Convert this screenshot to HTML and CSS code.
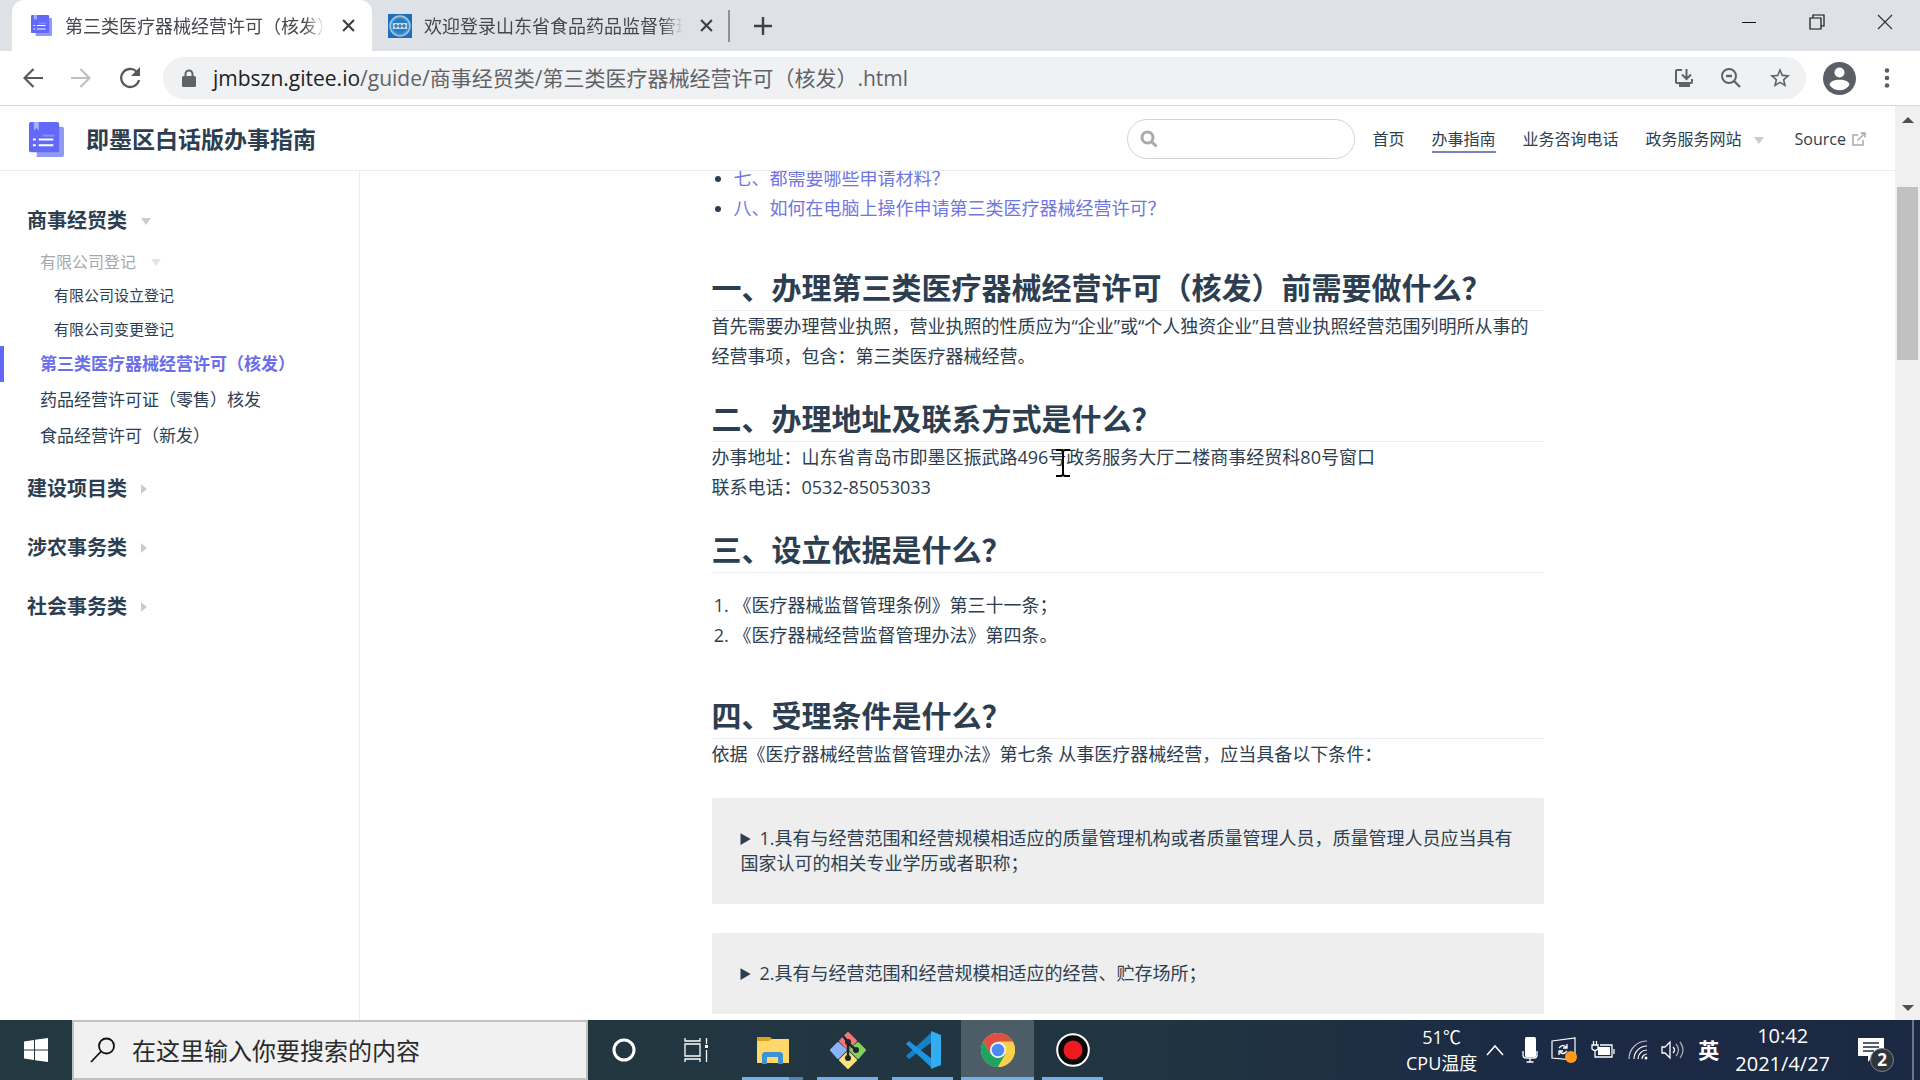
FILE: index.html
```html
<!DOCTYPE html>
<html lang="zh-CN">
<head>
<meta charset="utf-8">
<title>第三类医疗器械经营许可（核发）</title>
<link rel="stylesheet" href="styles.css">
</head>
<body>
<svg class="defs" width="0" height="0" aria-hidden="true">
  <symbol id="book" viewBox="0 0 36 36">
    <path fill="#8e9bf0" d="M8 5h26a2 2 0 0 1 2 2v27a2 2 0 0 1-2 2H8z"/>
    <path fill="#6269f8" d="M2 0h27a2 2 0 0 1 2 2v27a2 2 0 0 1-2 2H2a2 2 0 0 1-2-2V2a2 2 0 0 1 2-2z"/>
    <path fill="#a9b1fb" d="M5 0h5v9l-2.500-3L5 9z"/>
    <path fill="none" stroke="#8990fa" stroke-width="2" d="M14 14h12"/>
    <path fill="none" stroke="#fff" stroke-width="2" d="M4 18h3M4 24h3M10 18h15M10 24h15"/>
  </symbol>
  <symbol id="cross" viewBox="0 0 12 12"><path fill="none" stroke="#3c4043" stroke-width="2" d="M1 1l10 10M11 1L1 11"/></symbol>
</svg>

<header class="tabs">
  <div class="tab tab-active">
    <svg class="tab-icon" width="21" height="21"><use href="#book"/></svg>
    <span class="tab-title">第三类医疗器械经营许可（核发）</span>
    <button class="tab-close" aria-label="关闭标签页"><svg width="13" height="13"><use href="#cross"/></svg></button>
  </div>
  <div class="tab">
    <svg class="tab-icon tab-emblem" width="24" height="24" viewBox="0 0 24 24"><rect width="24" height="24" fill="#1c6fb8"/><circle cx="12" cy="12" r="10" fill="#4a94cf" stroke="#a3c8e6" stroke-width="1.500"/><circle cx="12" cy="12" r="7.500" fill="#2c7cc0"/><path fill="#bcd9ef" d="M5 9h14v6H5z"/><path stroke="#2467a6" stroke-width="1.200" d="M8 10v4M12 10v4M16 10v4M6 12h12"/></svg>
    <span class="tab-title">欢迎登录山东省食品药品监督管理局</span>
    <button class="tab-close" aria-label="关闭标签页"><svg width="13" height="13"><use href="#cross"/></svg></button>
  </div>
  <button class="new-tab" aria-label="新标签页"><svg width="18" height="18" viewBox="0 0 18 18"><path stroke="#3c4043" stroke-width="2.400" d="M9 0v18M0 9h18"/></svg></button>
  <div class="win-controls">
    <button aria-label="最小化"><svg width="16" height="16" viewBox="0 0 16 16"><path stroke="#111" d="M1 8.500h14"/></svg></button>
    <button aria-label="还原"><svg width="16" height="16" viewBox="0 0 16 16"><path fill="none" stroke="#111" stroke-width="1.200" d="M1 4h11v11H1zM4 4V1h11v11h-3"/></svg></button>
    <button aria-label="关闭"><svg width="16" height="16" viewBox="0 0 16 16"><path stroke="#333" stroke-width="1.200" d="M1 1l14 14M15 1L1 15"/></svg></button>
  </div>
</header>

<div class="toolbar">
  <button aria-label="后退"><svg width="20" height="20" viewBox="0 0 20 20"><path fill="none" stroke="#55595d" stroke-width="2.200" d="M20 10H2M10.500 1L1.500 10l9 9"/></svg></button>
  <button aria-label="前进"><svg width="20" height="20" viewBox="0 0 20 20"><path fill="none" stroke="#bdc1c5" stroke-width="2.200" d="M0 10h18M9.500 1l9 9-9 9"/></svg></button>
  <button aria-label="重新加载"><svg width="22" height="22" viewBox="0 0 22 22"><path fill="none" stroke="#55595d" stroke-width="2.300" d="M17.500 4.500A9 9 0 1 0 20 13"/><path fill="#55595d" d="M21 0v9h-9z"/></svg></button>
  <div class="omnibox">
    <svg width="14" height="18" viewBox="0 0 14 18"><path fill="none" stroke="#5f6368" stroke-width="2" d="M3.500 8V5a3.500 3.500 0 0 1 7 0v3"/><rect y="7" width="14" height="11" rx="1.500" fill="#5f6368"/></svg>
    <p class="url"><span class="url-host">jmbszn.gitee.io</span>/guide/商事经贸类/第三类医疗器械经营许可（核发）.html</p>
    <button aria-label="安装"><svg width="20" height="20" viewBox="0 0 20 20"><path fill="none" stroke="#5f6368" stroke-width="2" d="M8 2H3a1 1 0 0 0-1 1v11a1 1 0 0 0 1 1h14a1 1 0 0 0 1-1v-3M12.500 1v9M8 6.500l4.500 4.500L17 6.500"/><path fill="#5f6368" d="M5 15h11v4H5z"/></svg></button>
    <button aria-label="缩放"><svg width="20" height="20" viewBox="0 0 20 20"><g fill="none" stroke="#5f6368" stroke-width="2"><circle cx="8" cy="8" r="7"/><path d="M13 13l6 6M5 8h6" stroke-width="2.300"/></g></svg></button>
    <button aria-label="收藏"><svg width="24" height="24" viewBox="0 0 24 24"><path fill="#5f6368" d="M22 9.240l-7.190-.620L12 2 9.190 8.630 2 9.240l5.460 4.730L5.820 21 12 17.270 18.180 21l-1.630-7.030L22 9.240zM12 15.400l-3.760 2.270 1-4.280-3.320-2.880 4.380-.380L12 6.100l1.710 4.040 4.380.380-3.320 2.880 1 4.280L12 15.400z"/></svg></button>
  </div>
  <button aria-label="账号"><svg width="33" height="33" viewBox="0 0 33 33"><circle cx="16.500" cy="16.500" r="16.500" fill="#5a5e66"/><circle cx="16.500" cy="10.500" r="5" fill="#fff"/><path fill="#fff" d="M6.500 23c0-7 20-7 20 0-4.500 7-15.500 7-20 0z"/></svg></button>
  <button class="menu" aria-label="菜单"><svg width="6" height="20" viewBox="0 0 6 20"><g fill="#5a5e63"><circle cx="3" cy="2.500" r="2.300"/><circle cx="3" cy="10" r="2.300"/><circle cx="3" cy="17.500" r="2.300"/></g></svg></button>
</div>

<div class="viewport">
  <div class="site">
    <header class="navbar">
      <svg width="35" height="35"><use href="#book"/></svg>
      <a class="site-name" href="#">即墨区白话版办事指南</a>
      <label class="search">
        <svg width="18" height="18" viewBox="0 0 18 18"><g fill="none" stroke="#aaa" stroke-width="3"><circle cx="7.500" cy="7.500" r="5.500"/><path d="M11.500 11.500l5 5"/></g></svg>
        <input type="text" aria-label="搜索">
      </label>
      <nav class="links">
        <a href="#">首页</a>
        <a href="#" class="current">办事指南</a>
        <a href="#">业务咨询电话</a>
        <a href="#" class="dropdown">政务服务网站<i class="arrow down"></i></a>
        <a href="#" class="source">Source<svg width="14" height="14" viewBox="0 0 14 14"><path fill="none" stroke="#aaa" stroke-width="1.500" d="M6 3H1v10h10V8M5.500 8.500L13 1M8.500 1H13v4.500"/></svg></a>
      </nav>
    </header>
    <div class="body">
      <aside class="sidebar">
        <section>
          <h3>商事经贸类<i class="arrow down"></i></h3>
          <p class="subgroup">有限公司登记<i class="arrow down"></i></p>
          <a class="sub" href="#">有限公司设立登记</a>
          <a class="sub" href="#">有限公司变更登记</a>
          <a class="item active" href="#">第三类医疗器械经营许可（核发）</a>
          <a class="item" href="#">药品经营许可证（零售）核发</a>
          <a class="item" href="#">食品经营许可（新发）</a>
        </section>
        <h3>建设项目类<i class="arrow right"></i></h3>
        <h3>涉农事务类<i class="arrow right"></i></h3>
        <h3>社会事务类<i class="arrow right"></i></h3>
      </aside>
      <main>
        <article>
          <ul class="toc">
            <li><a href="#">七、都需要哪些申请材料？</a></li>
            <li><a href="#">八、如何在电脑上操作申请第三类医疗器械经营许可？</a></li>
          </ul>
          <h2>一、办理第三类医疗器械经营许可（核发）前需要做什么？</h2>
          <p>首先需要办理营业执照，营业执照的性质应为“企业”或“个人独资企业”且营业执照经营范围列明所从事的经营事项，包含：第三类医疗器械经营。</p>
          <h2>二、办理地址及联系方式是什么？</h2>
          <p>办事地址：山东省青岛市即墨区振武路496号政务服务大厅二楼商事经贸科80号窗口<br>联系电话：0532-85053033</p>
          <h2>三、设立依据是什么？</h2>
          <ol>
            <li>《医疗器械监督管理条例》第三十一条；</li>
            <li>《医疗器械经营监督管理办法》第四条。</li>
          </ol>
          <h2>四、受理条件是什么？</h2>
          <p>依据《医疗器械经营监督管理办法》第七条 从事医疗器械经营，应当具备以下条件：</p>
          <details><summary>1.具有与经营范围和经营规模相适应的质量管理机构或者质量管理人员，质量管理人员应当具有国家认可的相关专业学历或者职称；</summary></details>
          <details><summary>2.具有与经营范围和经营规模相适应的经营、贮存场所；</summary></details>
        </article>
      </main>
    </div>
  </div>
  <div class="scrollbar"><i class="scroll-up"></i><div class="track"><div class="thumb"></div></div><i class="scroll-down"></i></div>
</div>

<footer class="taskbar">
  <button class="start" aria-label="开始"><svg width="24" height="24" viewBox="0 0 24 24"><path fill="#fff" d="M0 3.500L10 2v9.500H0zM11 1.800L24 0v11.500H11zM0 12.500h10V22L0 20.500zM11 12.500h13V24l-13-1.800z"/></svg></button>
  <label class="task-search">
    <svg width="26" height="26" viewBox="0 0 26 26"><g fill="none" stroke="#111" stroke-width="1.800"><circle cx="16.500" cy="9" r="7.500"/><path d="M11 14.500L1 25"/></g></svg>
    <input type="text" placeholder="在这里输入你要搜索的内容" aria-label="搜索">
  </label>
  <div class="apps">
    <button aria-label="Cortana"><svg width="24" height="24" viewBox="0 0 24 24"><circle cx="12" cy="12" r="10" fill="none" stroke="#fff" stroke-width="3"/></svg></button>
    <button aria-label="任务视图"><svg width="25" height="24" viewBox="0 0 25 24"><path fill="none" stroke="#fff" stroke-width="1.300" d="M1 0v3h15V0M1 6h15v12H1zM1 24v-3h15v3M22.500 0v6M22.500 12v12"/><path fill="#fff" d="M21 7h3v3h-3z"/></svg></button>
    <button class="open stacked" aria-label="文件资源管理器"><svg width="32" height="28" viewBox="0 0 32 28"><path fill="#dca320" d="M0 1h13l3 3v4H0z"/><path fill="#ffd869" d="M0 5h12l3-2h17v24H0z"/><path fill="#3b92d4" d="M5 28V18l2-2h17l2 2v10h-5v-7H10v7z"/></svg></button>
    <button class="open" aria-label="Git"><svg width="36" height="38" viewBox="0 0 36 38"><g stroke-linejoin="round" stroke-width="2"><path fill="#f17878" stroke="#f17878" d="M18 2l8 8-8 8-8-8z"/><path fill="#8ab4fa" stroke="#8ab4fa" d="M8 12l8 7-8 8-7-8z"/><path fill="#83cf5e" stroke="#83cf5e" d="M28 12l7 7-7 8-8-8z"/><path fill="#fbe27d" stroke="#fbe27d" d="M18 21l8 8-8 8-8-8z"/></g><path fill="none" stroke="#202529" stroke-width="2.500" d="M13 5l5 6v16M18 12l8 7"/><g fill="#202529"><circle cx="18" cy="11" r="3"/><circle cx="26" cy="19" r="3"/><circle cx="18" cy="27" r="3"/></g></svg></button>
    <button class="open" aria-label="Visual Studio Code"><svg width="36" height="38" viewBox="0 0 36 38"><path fill="#1481c9" d="M1 25l3 3 23-17V1z"/><path fill="#1b95e0" d="M1 13l3-3 23 18v9z"/><path fill="#33adf2" d="M26 0l10 4v30l-10 4z"/></svg></button>
    <button class="open focused" aria-label="Chrome"><svg width="34" height="34" viewBox="0 0 34 34"><circle cx="17" cy="17" r="17" fill="#fbd049"/><path fill="#de5044" d="M2.300 8.500A17 17 0 0 1 31.700 8.500H17L9.600 21z"/><path fill="#1da462" d="M2.300 8.500A17 17 0 0 0 17 34l7.400-12.800H9.600z"/><path fill="#fbd049" d="M17 9h15a17 17 0 0 1-15 25l7.400-12.800z"/><circle cx="17" cy="17" r="8" fill="#f4f7fa"/><circle cx="17" cy="17" r="6.300" fill="#4c8bf5"/></svg></button>
    <button class="open" aria-label="录屏"><svg width="34" height="34" viewBox="0 0 34 34"><circle cx="17" cy="17" r="15.800" fill="#080808" stroke="#fff" stroke-width="2"/><circle cx="17" cy="17" r="9.500" fill="#ee1c20"/></svg></button>
  </div>
  <div class="tray">
    <p class="cpu">51℃<br>CPU温度</p>
    <svg class="chevron" width="18" height="12" viewBox="0 0 18 12"><path fill="none" stroke="#fff" stroke-width="1.500" d="M1 11l8-9 8 9"/></svg>
    <svg width="16" height="26" viewBox="0 0 16 26"><rect x="3" width="11" height="20" rx="1.500" fill="#fff"/><path fill="none" stroke="#fff" stroke-width="1.300" d="M1 14v4q0 3 3 3h8q3 0 3-3v-4M8 21v4M4.500 25h7"/></svg>
    <svg width="26" height="26" viewBox="0 0 26 26"><path fill="none" stroke="#fff" stroke-width="1.200" d="M1 4l23-3v22L1 21z"/><path fill="none" stroke="#fff" stroke-width="1.300" d="M8 11q4-5 8 0M16 7v4h-4M16 14q-4 5-8 0M8 18v-4h4"/><circle cx="20" cy="20" r="6" fill="#ff9a1a"/></svg>
    <svg width="25" height="20" viewBox="0 0 25 20"><path fill="none" stroke="#fff" stroke-width="1.300" d="M2 5h6v4q-3 3-6 0zM3.500 1v4M6.500 1v4M5 11v6h17V5H10M24 9v5"/><path fill="#fff" d="M8 7h12v8H8z"/></svg>
    <svg width="20" height="20" viewBox="0 0 20 20"><g fill="none" stroke="#fff" stroke-width="1.200"><path opacity=".700" d="M1 19A18 18 0 0 1 19 1"/><path d="M6 19A13 13 0 0 1 19 6M10 19a9 9 0 0 1 9-9M14 19a5 5 0 0 1 5-5"/></g><circle cx="18" cy="18" r="1.500" fill="#fff"/></svg>
    <svg width="24" height="20" viewBox="0 0 24 20"><g fill="none" stroke="#fff" stroke-width="1.300"><path d="M1 7h3l5-5v16l-5-5H1z"/><path d="M12 7q3 3 0 6"/><path opacity=".600" d="M15 4q5 6 0 12M19 2q6 8 0 16"/></g></svg>
    <span class="ime">英</span>
    <p class="clock">10:42<br>2021/4/27</p>
    <button class="notify" aria-label="通知"><svg width="26" height="26" viewBox="0 0 26 26"><path fill="#fff" d="M0 1h26v18H15l-5 6v-6H0z"/><path stroke="#1e2c42" stroke-width="1.500" d="M5 6h16M5 10h16M5 14h11"/></svg><span class="badge">2</span></button>
  </div>
</footer>
<svg class="cursor" width="14" height="28" viewBox="0 0 14 28" aria-hidden="true"><path fill="none" stroke="#000" stroke-width="2" d="M0 1h5l2 1 2-1h5M7 2v24M0 27h5l2-1 2 1h5"/></svg>
</body>
</html>
```
FILE: styles.css
```css
* { box-sizing: border-box; }
body {
  margin: 0;
  height: 100vh;
  display: flex;
  flex-direction: column;
  overflow: hidden;
  background: #fff;
  color: #2c3e50;
  font-family: "Open Sans", "Noto Sans CJK SC", sans-serif;
}
p, h2, h3, ul, ol { margin: 0; }
a { color: inherit; text-decoration: none; }
button {
  display: flex;
  align-items: center;
  justify-content: center;
  padding: 0;
  border: 0;
  background: none;
  color: inherit;
  font: inherit;
}
input { border: 0; outline: 0; background: none; font: inherit; min-width: 0; }
svg { flex: none; }
.defs { position: absolute; }

/* Tab strip */
.tabs { flex: none; height: 51px; display: flex; background: #dee1e6; padding-left: 12px; }
.tab { width: 360px; display: flex; align-items: center; padding: 0 17px 0 19px; }
.tab-active { background: #fff; border-radius: 12px 12px 0 0; }
.tab + .tab { width: 358px; padding: 0 15px 0 16px; border-right: 2px solid #8f9296; border-image: linear-gradient(transparent 11px, #8f9296 11px, #8f9296 41px, transparent 41px) 1; }
.tab-icon { margin-right: 13px; }
.tab + .tab .tab-icon { margin-right: 12px; }
.tab-title {
  flex: 1;
  overflow: hidden;
  white-space: nowrap;
  font-size: 18px;
  line-height: 26px;
  color: #45494d;
  mask-image: linear-gradient(to right, #000 92%, transparent);
}
.tab-close { width: 14px; margin-left: 16px; }
.new-tab { width: 36px; margin-left: 15px; }
.win-controls { margin-left: auto; display: flex; padding: 0 1px 8px 0; }
.win-controls button { width: 68px; }

/* Toolbar */
.toolbar { flex: none; height: 55px; display: flex; align-items: center; padding: 0 30px 0 23px; border-bottom: 1px solid #d5d7da; }
.toolbar > button { margin-right: 28px; }
.toolbar > button:nth-of-type(3) { margin-right: 22px; }
.omnibox { flex: 1; height: 42px; display: flex; align-items: center; gap: 27px; padding: 0 14px 0 19px; margin-right: 17px; border-radius: 21px; background: #f0f1f3; }
.url { flex: 1; margin-left: -10px; font-size: 21px; line-height: 30px; color: #5f6368; white-space: nowrap; }
.url-host { color: #202124; }
.toolbar > .menu { margin-right: 0; }

/* Page */
.viewport { flex: 1; min-height: 0; display: flex; }
.site { flex: 1; min-width: 0; display: flex; flex-direction: column; }
.navbar { flex: none; height: 65px; display: flex; align-items: center; padding: 2px 29px 0; border-bottom: 1px solid #eaecef; }
.site-name { margin-left: 22px; font-size: 23px; font-weight: 700; line-height: 32px; }
.search { margin-left: auto; width: 228px; height: 40px; display: flex; align-items: center; gap: 8px; padding: 0 12px; border: 1px solid #cfd4db; border-radius: 20px; }
.search input { flex: 1; font-size: 16px; }
.links { display: flex; gap: 27px; margin-left: 18px; font-size: 16px; line-height: 24px; }
.links a { border-bottom: 2px solid transparent; border-top: 2px solid transparent; }
.links .current { border-bottom-color: #7c80c4; }
.source { display: flex; align-items: center; gap: 6px; margin-left: 4px; font-weight: 500; }
.arrow { display: inline-block; vertical-align: middle; border: 5px solid transparent; }
.down { border-top: 7px solid #ccc; border-bottom: 0; margin-left: 12px; }
.right { border-left: 6px solid #ccc; border-right: 0; margin-left: 14px; }
.body { flex: 1; min-height: 0; display: flex; }
.sidebar { flex: none; width: 360px; padding: 30px 0; border-right: 1px solid #eaecef; }
.sidebar a { display: block; }
.sidebar h3, .subgroup { display: flex; align-items: center; }
.sidebar h3 { padding: 0 27px; margin-bottom: 19px; font-size: 20px; line-height: 40px; }
.sidebar section { margin-bottom: 15px; }
.sidebar section h3 { margin-bottom: 5px; }
.sidebar h3 .down { margin-left: 14px; }
.subgroup { padding-left: 40px; font-size: 16px; line-height: 32px; color: #a5a9ae; }
.subgroup .down { margin-left: 15px; border-top-color: #e2e3e4; }
.sub { padding-left: 54px; font-size: 15px; line-height: 34px; }
.item { padding-left: 36px; border-left: 4px solid transparent; font-size: 17px; line-height: 36px; }
.item.active { border-left-color: #6269f8; color: #6b6ee9; font-weight: 700; }

main { flex: 1; min-width: 0; overflow: hidden; }
article { display: flex; flex-direction: column; max-width: 832px; margin: 0 auto; font-size: 18px; line-height: 30px; }
ul, ol { padding-left: 22px; margin: 17px 0; }
ol { margin-bottom: 18px; }
.toc { margin-top: -8px; }
.toc a { color: #7076e0; }
h2 { margin-top: 28px; padding-bottom: 2px; border-bottom: 1px solid #eaecef; font-size: 30px; line-height: 40px; }
details { margin-top: 29px; padding: 28px 29px; border-radius: 2px; background: #eee; line-height: 25px; }

.scrollbar { flex: none; width: 25px; display: flex; flex-direction: column; align-items: center; padding: 11px 0 9px; background: #f0f0f0; }
.scroll-up, .scroll-down { border: 6px solid transparent; }
.scroll-up { border-top: 0; border-bottom-color: #505050; }
.scroll-down { border-bottom: 0; border-top-color: #505050; }
.track { flex: 1; width: 21px; padding-top: 64px; }
.thumb { height: 173px; background: #c1c1c1; }

/* Taskbar */
.taskbar { flex: none; height: 60px; display: flex; background: linear-gradient(to right, #233941, #213540 60%, #1b2a45 80%, #1c2943); color: #fff; }
.start { width: 72px; }
.task-search { width: 516px; display: flex; align-items: center; gap: 16px; padding-left: 16px; border: 2px solid #c0c0c0; background: #f1f1f1; }
.task-search input { flex: 1; padding: 0; font-size: 24px; }
.task-search input::placeholder { color: #2b2b2b; }
.apps { display: flex; padding-left: 1px; }
.apps button { width: 70px; }
.apps button:nth-child(2) { margin: 0 4px 0 2px; }
.apps .open { width: 61px; margin: 0 7px; border-bottom: 3px solid #76b0e3; border-top: 3px solid transparent; }
.apps .stacked { border-image: linear-gradient(to right, #76b0e3 47px, #5283ad 47px) 0 0 3; }
.apps .focused { width: 73px; margin: 0 1px; background: #4d5d67; border-top-color: #4d5d67; }
.tray { margin-left: auto; display: flex; align-items: center; gap: 13px; padding-right: 13px; margin-right: 6px; border-right: 2px solid #6d7788; }
.tray p { text-align: center; }
.cpu { font-size: 18px; line-height: 26px; }
.chevron { margin: 0 5px 0 -4px; }
.ime { margin-right: 3px; font-size: 21px; font-weight: 700; line-height: 30px; }
.clock { font-size: 20px; line-height: 28px; }
.notify { position: relative; width: 56px; }
.badge { position: absolute; left: 27px; top: 11px; width: 24px; height: 24px; border: 1px solid #7d828b; border-radius: 12px; background: #30343d; font-size: 17px; font-weight: 700; line-height: 22px; text-align: center; }

.cursor { position: absolute; left: 1056px; top: 449px; }
```
